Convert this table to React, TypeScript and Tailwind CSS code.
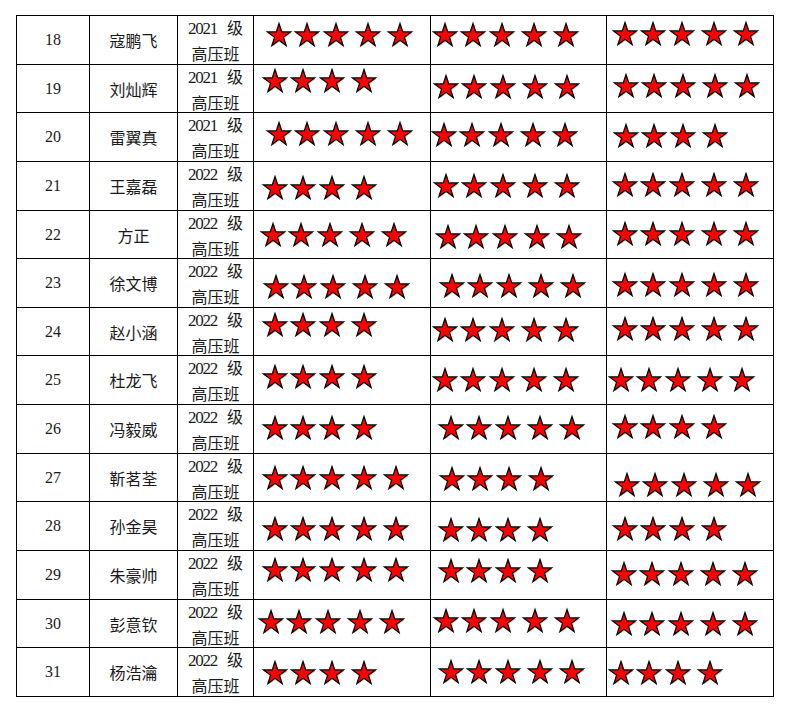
import React from 'react';

type Stars = [count: number, left: number, top: number];

type Row = {
  no: number;
  name: string;
  year: string;
  a: Stars;
  b: Stars;
  c: Stars;
};

// star boxes: [how many, px from cell left, px from row top]
const rows: Row[] = [
  { no: 18, name: '寇鹏飞', year: '2021', a: [5, 13, 7], b: [5, 2, 7], c: [5, 6, 6] },
  { no: 19, name: '刘灿辉', year: '2021', a: [4, 9, 4], b: [5, 3, 10], c: [5, 7, 9] },
  { no: 20, name: '雷翼真', year: '2021', a: [5, 13, 9], b: [5, 1, 10], c: [4, 7, 11] },
  { no: 21, name: '王嘉磊', year: '2022', a: [4, 9, 14], b: [5, 3, 12], c: [5, 6, 11] },
  { no: 22, name: '方正', year: '2022', a: [5, 7, 12], b: [5, 5, 14], c: [5, 6, 11] },
  { no: 23, name: '徐文博', year: '2022', a: [5, 10, 16], b: [5, 9, 15], c: [5, 6, 14] },
  { no: 24, name: '赵小涵', year: '2022', a: [4, 9, 5], b: [5, 2, 10], c: [5, 6, 9] },
  { no: 25, name: '杜龙飞', year: '2022', a: [4, 9, 9], b: [5, 2, 12], c: [5, 2, 12] },
  { no: 26, name: '冯毅威', year: '2022', a: [4, 9, 11], b: [5, 8, 11], c: [4, 6, 10] },
  { no: 27, name: '靳茗荃', year: '2022', a: [5, 9, 12], b: [4, 9, 13], c: [5, 8, 19] },
  { no: 28, name: '孙金昊', year: '2022', a: [5, 9, 15], b: [4, 8, 16], c: [4, 6, 15] },
  { no: 29, name: '朱豪帅', year: '2022', a: [5, 9, 7], b: [4, 8, 8], c: [5, 5, 11] },
  { no: 30, name: '彭意钦', year: '2022', a: [5, 5, 10], b: [5, 3, 9], c: [5, 5, 12] },
  { no: 31, name: '杨浩瀹', year: '2022', a: [4, 9, 13], b: [5, 8, 12], c: [4, 2, 13] },
];

const starPts =
  '12,0.5 14.74,8.93 23.6,8.93 16.43,14.14 19.17,22.57 12,17.36 4.83,22.57 7.57,14.14 0.4,8.93 9.26,8.93';

const gaps = ['', 'ml-1', 'ml-[5px]', 'ml-2', 'ml-2'];

function Star({ className }: { className: string }) {
  return (
    <svg width="24" height="24" viewBox="0 0 24 24" className={`shrink-0 overflow-visible ${className}`}>
      <polygon points={starPts} transform="translate(1 1)" fill="#8c8c8c" opacity="0.55" />
      <polygon points={starPts} fill="#ff0000" stroke="#000" strokeWidth="1.2" strokeLinejoin="miter" />
    </svg>
  );
}

function StarCell({ s }: { s: Stars }) {
  const [count, left, top] = s;
  return (
    <div className="border-r border-b border-black">
      <div className="flex items-start" style={{ paddingLeft: left, paddingTop: top }}>
        {Array.from({ length: count }).map((_, i) => (
          <Star key={i} className={gaps[i]} />
        ))}
      </div>
    </div>
  );
}

const cell = 'border-r border-b border-black flex items-center justify-center text-[#1a1a1a]';

export default function App() {
  return (
    <div className="w-[785px] h-[704px] bg-white pt-[15px] pl-4 font-['Liberation_Serif','Noto_Sans_CJK_SC',serif]">
      <div className="grid w-[758px] grid-cols-[73px_88px_76px_177px_176px_167px] grid-rows-[49px_48px_49px_49px_48px_49px_48px_49px_49px_48px_49px_49px_48px_49px] border-l border-t border-black">
        {rows.map((r) => (
          <React.Fragment key={r.no}>
            <div className={`${cell} text-[16px]`}>{r.no}</div>
            <div className={`${cell} text-[16px] font-['Noto_Sans_CJK_SC',sans-serif]`}>{r.name}</div>
            <div className={`${cell} flex-col text-[16px] leading-[24px]`}>
              <div className="flex items-baseline">
                <span className="text-[17px] tracking-[-1.2px]">{r.year}</span>
                <span className="ml-[10px] font-['Noto_Sans_CJK_SC',sans-serif]">级</span>
              </div>
              <div className="font-['Noto_Sans_CJK_SC',sans-serif]">高压班</div>
            </div>
            <StarCell s={r.a} />
            <StarCell s={r.b} />
            <StarCell s={r.c} />
          </React.Fragment>
        ))}
      </div>
    </div>
  );
}
